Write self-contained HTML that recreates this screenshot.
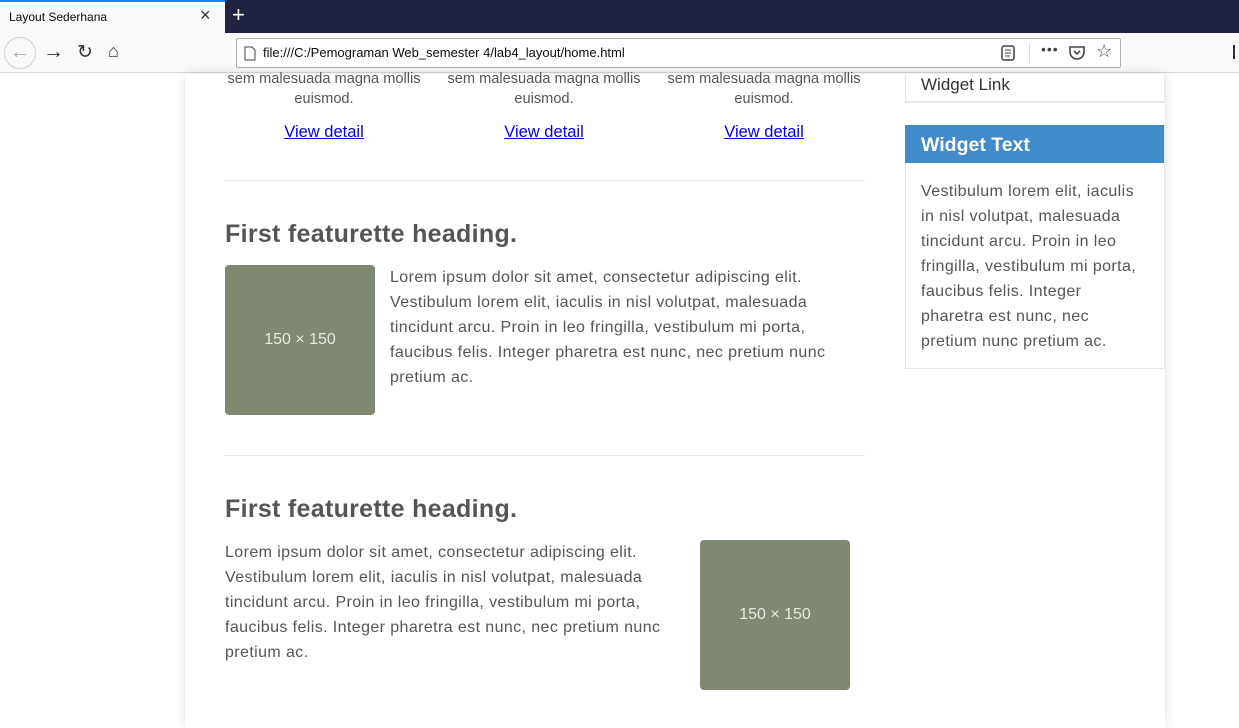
<!DOCTYPE html>
<html><head><meta charset="utf-8"><style>
*{margin:0;padding:0;box-sizing:border-box}
body{width:1239px;height:728px;overflow:hidden;background:#fff;font-family:"Liberation Sans",sans-serif;position:relative;color:#555}
.a{position:absolute;white-space:nowrap}
.tabs{position:absolute;left:0;top:0;width:1239px;height:33px;background:#202340}
.tab{position:absolute;left:0;top:0;width:225px;height:33px;background:#f9f9fa;border-top:2px solid #0a84ff}
.tool{position:absolute;left:0;top:33px;width:1239px;height:40px;background:#f9f9fa;border-bottom:1px solid #d7d7db}
.url{position:absolute;left:236px;top:38px;width:885px;height:30px;background:#fff;border:1px solid #b1b1b3;border-radius:2px}
.page{position:absolute;left:185px;top:74px;width:980px;height:654px;background:#fff;box-shadow:0 0 12px rgba(0,0,0,.12)}
.col{position:absolute;width:220px;text-align:center;font-size:14.6px;line-height:20px;color:#555}
.col a{display:block;margin-top:13px;color:#00e;font-size:16.5px;text-decoration:underline}
.hr{position:absolute;left:225px;width:640px;height:1px;background:#e8e8e8}
h2{position:absolute;font-size:25px;letter-spacing:.3px;font-weight:bold;color:#555;left:225px}
.ph{position:absolute;width:150px;height:150px;background:#7f8972;border-radius:4px;color:#e6e9e0;font-size:16px;text-align:center;line-height:150px}
.p{position:absolute;font-size:16px;letter-spacing:.4px;line-height:25px;color:#555;white-space:nowrap}
</style></head><body>
<div class="tabs"></div>
<div class="tab"><span class="a" style="left:9px;top:8px;font-size:12px;color:#0c0c0d">Layout Sederhana</span><span class="a" style="left:200px;top:3px;font-size:18px;color:#333">×</span></div>
<span class="a" style="left:232px;top:2px;font-size:22px;color:#fff">+</span>
<div class="tool"></div>
<div class="a" style="left:4px;top:37px;width:32px;height:32px;border:1px solid #d0d0d0;border-radius:50%;color:#aaa;font-size:20px;text-align:center;line-height:29px">←</div>
<span class="a" style="left:43px;top:40px;font-size:21px;color:#333">→</span>
<span class="a" style="left:77px;top:41px;font-size:19px;color:#333">↻</span>
<span class="a" style="left:108px;top:41px;font-size:18px;color:#333">⌂</span>
<div class="url">
<svg class="a" style="left:7px;top:7px" width="12" height="15"><path d="M1 1h7l3 3v10H1z" fill="none" stroke="#444"/></svg>
<span class="a" style="left:26px;top:6px;font-size:13px;color:#0c0c0d">file:///C:/Pemograman Web_semester 4/lab4_layout/home.html</span>
<svg class="a" style="left:764px;top:6px" width="14" height="17"><rect x="1" y="1" width="12" height="14" rx="2" fill="none" stroke="#444" stroke-width="1.5"/><path d="M4 5h6M4 8h6M4 11h5" stroke="#444"/></svg>
<div class="a" style="left:792px;top:4px;width:1px;height:20px;background:#ddd"></div>
<span class="a" style="left:804px;top:2px;font-size:14px;color:#444;letter-spacing:1px">•••</span>
<svg class="a" style="left:831px;top:6px" width="18" height="16"><path d="M2 2h14v5a7 7 0 0 1-14 0z" fill="none" stroke="#444" stroke-width="1.6"/><path d="M6 6l3 3 3-3" fill="none" stroke="#444" stroke-width="1.6"/></svg>
<span class="a" style="left:859px;top:2px;font-size:18px;color:#444">☆</span>
</div>
<div class="a" style="left:1233px;top:45px;width:2px;height:14px;background:#333"></div>
<div class="page"></div>
<div class="col a" style="left:214px;top:69px">sem malesuada magna mollis<br>euismod.<a>View detail</a></div>
<div class="col a" style="left:434px;top:69px">sem malesuada magna mollis<br>euismod.<a>View detail</a></div>
<div class="col a" style="left:654px;top:69px">sem malesuada magna mollis<br>euismod.<a>View detail</a></div>
<div class="hr" style="top:180px"></div>
<h2 style="top:220px">First featurette heading.</h2>
<div class="ph" style="left:225px;top:265px">150 × 150</div>
<div class="p" style="left:390px;top:265px">Lorem ipsum dolor sit amet, consectetur adipiscing elit.<br>Vestibulum lorem elit, iaculis in nisl volutpat, malesuada<br>tincidunt arcu. Proin in leo fringilla, vestibulum mi porta,<br>faucibus felis. Integer pharetra est nunc, nec pretium nunc<br>pretium ac.</div>
<div class="hr" style="top:455px"></div>
<h2 style="top:495px">First featurette heading.</h2>
<div class="p" style="left:225px;top:540px">Lorem ipsum dolor sit amet, consectetur adipiscing elit.<br>Vestibulum lorem elit, iaculis in nisl volutpat, malesuada<br>tincidunt arcu. Proin in leo fringilla, vestibulum mi porta,<br>faucibus felis. Integer pharetra est nunc, nec pretium nunc<br>pretium ac.</div>
<div class="ph" style="left:700px;top:540px">150 × 150</div>
<div class="a" style="left:905px;top:74px;width:260px;height:29px;border:1px solid #e8e8e8;border-top:none;border-bottom:2px solid #e8e8e8"></div>
<span class="a" style="left:921px;top:75px;font-size:17px;color:#333">Widget Link</span>
<div class="a" style="left:905px;top:125px;width:260px;height:244px;border:1px solid #e8e8e8"></div>
<div class="a" style="left:905px;top:125px;width:259px;height:38px;background:#428bca"></div>
<span class="a" style="left:921px;top:134px;font-size:19.5px;font-weight:bold;color:#fff">Widget Text</span>
<div class="p" style="left:921px;top:179px">Vestibulum lorem elit, iaculis<br>in nisl volutpat, malesuada<br>tincidunt arcu. Proin in leo<br>fringilla, vestibulum mi porta,<br>faucibus felis. Integer<br>pharetra est nunc, nec<br>pretium nunc pretium ac.</div>
</body></html>
